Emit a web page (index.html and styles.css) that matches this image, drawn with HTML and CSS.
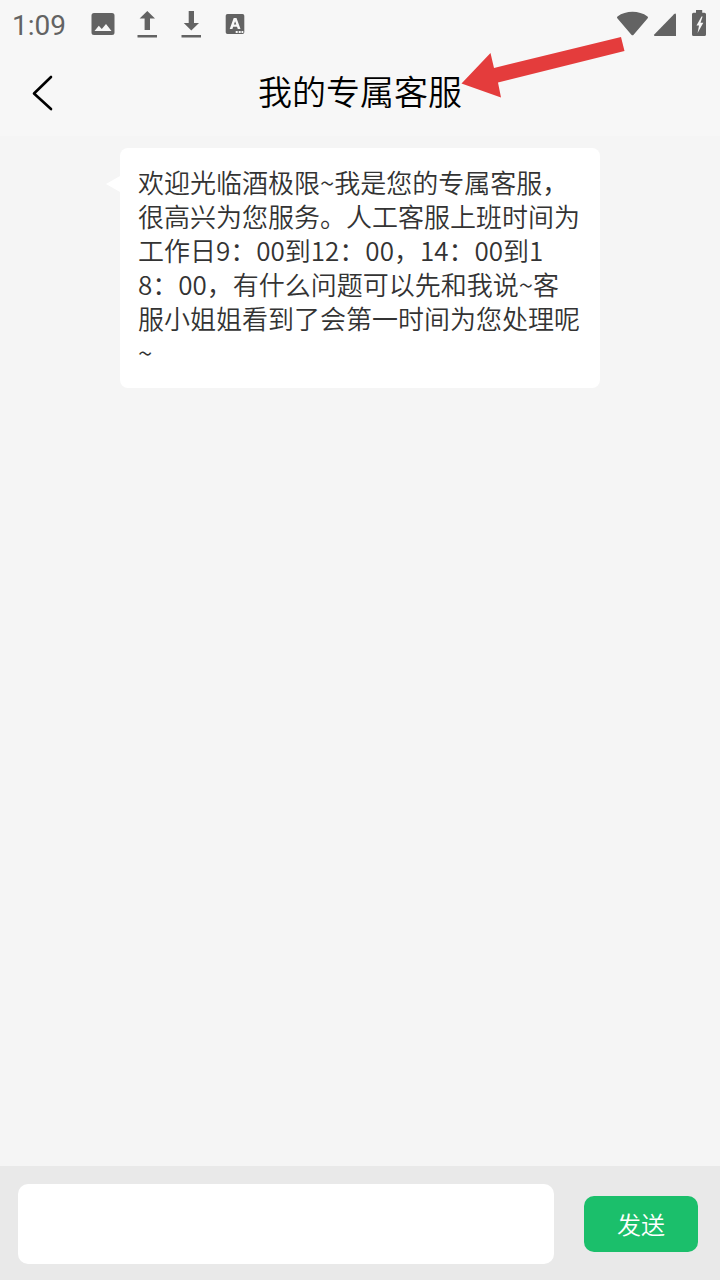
FILE: index.html
```html
<!DOCTYPE html>
<html lang="zh-CN">
<head>
  <meta charset="UTF-8">
  <meta name="viewport" content="width=device-width, initial-scale=1.0">
  <title>我的专属客服</title>
  <link rel="stylesheet" href="styles.css">
</head>
<body>
  <div class="app">
    <!-- 状态栏 -->
    <div class="status-bar">
      <span class="time">1:09</span>
      <svg class="status-icons" width="160" height="48" viewBox="88 0 160 48">
        <path fill-rule="evenodd" d="M94 13h18a2.500 2.500 0 0 1 2.500 2.500v17a2.500 2.500 0 0 1-2.500 2.500H94a2.500 2.500 0 0 1-2.500-2.500v-17A2.500 2.500 0 0 1 94 13zM94.500 31h17l-5.500-7-4.200 5-3-3.300z"/>
        <path d="M147.300 11l7.700 7.500h-5V30h-5.400V18.500h-5zM137.500 35h19.500v2.400h-19.500z"/>
        <path d="M188.700 11h5.300v12h5l-7.700 7.500-7.500-7.500h4.900zM181.500 35H201v2.400h-19.500z"/>
        <path fill-rule="evenodd" d="M227.500 14h15a1.800 1.800 0 0 1 1.800 1.800v16.400a1.800 1.800 0 0 1-1.800 1.800h-15a1.800 1.800 0 0 1-1.800-1.800V15.800a1.800 1.800 0 0 1 1.800-1.800zM233.700 18l-4 11h2.700l.8-2.300h3.800l.8 2.300h2.700l-4-11zM235.100 21.200l1.200 3.400h-2.400zM235.700 31v2h2v-2zM238.700 31v2h2v-2zM241.500 31v2h1.800v-2z"/>
      </svg>
      <svg class="signal-icons" width="94" height="48" viewBox="614 0 94 48">
        <path d="M617.500 16.500C626 10.300 639 10.300 647.500 16.500Q648.500 17.300 647.700 18.200L633.600 34.700Q632.500 36 631.400 34.700L617.300 18.200Q616.500 17.300 617.500 16.500z"/>
        <path d="M676 14.500V36h-21.200q-1.600-.3-.3-1.700L674 14.200q1.600-1.400 2 .3z"/>
        <path fill-rule="evenodd" d="M696 10h6.200v2.700h2.300a1.500 1.500 0 0 1 1.500 1.500v20.300a1.500 1.500 0 0 1-1.500 1.500h-11a1.500 1.500 0 0 1-1.500-1.500V14.200a1.500 1.500 0 0 1 1.500-1.500h2.500zM701.500 16.500l-5 9h2.500l-1.400 7.500 5.700-10.300h-2.800l2.100-6.200z"/>
      </svg>
    </div>

    <!-- 标题栏 -->
    <header class="nav-bar">
      <svg class="back" width="22" height="36" viewBox="0 0 22 36">
        <path d="M19 2L2 18.500L19 34"/>
      </svg>
      <h1>我的专属客服</h1>
    </header>

    <!-- 聊天内容 -->
    <main class="chat">
      <div class="bubble">欢迎光临酒极限~我是您的专属客服，<br>很高兴为您服务。人工客服上班时间为<br>工作日9：00到12：00，14：00到1<br>8：00，有什么问题可以先和我说~客<br>服小姐姐看到了会第一时间为您处理呢<br>~</div>
    </main>

    <!-- 输入区 -->
    <form class="input-bar">
      <input type="text" class="message">
      <button type="button" class="send">发送</button>
    </form>

    <svg class="arrow" width="164" height="62" viewBox="461 36 164 62">
      <path d="M461.500 83.500L490.500 53L494 68L621 37L624.500 51L498 82.500L501 97.500z"/>
    </svg>
  </div>
</body>
</html>
```
FILE: styles.css
```css
* {
  box-sizing: border-box;
  margin: 0;
  padding: 0;
}
body {
  font-family: "Noto Sans CJK SC", sans-serif;
  background: #f5f5f5;
  color: #333;
}
.app {
  position: relative;
  display: flex;
  flex-direction: column;
  height: 1280px;
  overflow: hidden;
}
/* 状态栏 */
.status-bar {
  display: flex;
  justify-content: space-between;
  height: 48px;
  padding: 0 12px;
  background: #f7f7f7;
}
.status-bar svg {
  fill: #636363;
}
.time {
  width: 76px;
  font-family: Roboto, sans-serif;
  font-size: 28px;
  line-height: 52px;
  color: #636363;
}
.status-icons {
  margin-right: auto;
}
/* 标题栏 */
.nav-bar {
  display: grid;
  grid-template-columns: 60px 1fr 60px;
  align-items: center;
  height: 88px;
  background: #f7f7f7;
}
.back {
  margin-left: 32px;
  margin-top: 2px;
  fill: none;
  stroke: #000;
  stroke-width: 2.6;
  stroke-linecap: round;
  stroke-linejoin: round;
}
.nav-bar h1 {
  padding-bottom: 3px;
  font-size: 34px;
  font-weight: 350;
  line-height: 48px;
  text-align: center;
  color: #000;
}
/* 聊天内容 */
.chat {
  flex: 1;
  padding: 12px 120px;
}
.bubble {
  position: relative;
  padding: 17px 18px 19px;
  background: #fff;
  border-radius: 8px;
  font-size: 26px;
  font-weight: 350;
  line-height: 34px;
  white-space: nowrap;
}
.bubble::before {
  content: "";
  position: absolute;
  left: -14px;
  top: 28px;
  border: solid transparent;
  border-width: 8px 14px 8px 0;
  border-right-color: #fff;
}
/* 输入区 */
.input-bar {
  display: flex;
  align-items: center;
  justify-content: space-between;
  height: 114px;
  padding: 2px 22px 0 18px;
  background: #e9e9e9;
}
.message {
  width: 536px;
  height: 80px;
  padding: 0 18px;
  border: none;
  border-radius: 10px;
  background: #fff;
  font-size: 26px;
}
.send {
  width: 114px;
  height: 56px;
  padding-bottom: 2px;
  border: none;
  border-radius: 10px;
  background: #1bbf6b;
  color: #fff;
  font-family: inherit;
  font-size: 24px;
  font-weight: 350;
}
/* 指向标题的箭头 */
.arrow {
  position: absolute;
  left: 461px;
  top: 36px;
  fill: #e43c3c;
}
```
